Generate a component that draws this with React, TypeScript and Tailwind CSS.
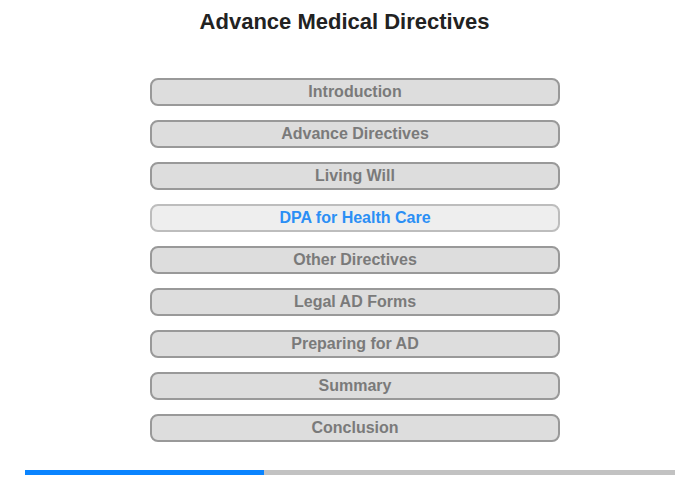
const chapters = [
  "Introduction",
  "Advance Directives",
  "Living Will",
  "DPA for Health Care",
  "Other Directives",
  "Legal AD Forms",
  "Preparing for AD",
  "Summary",
  "Conclusion",
];

const current = 3;

export default function App() {
  const percent = 36.8;

  return (
    <div
      className="w-[700px] h-[480px] bg-white overflow-hidden"
      style={{ fontFamily: '"Liberation Sans", Arial, sans-serif' }}
    >
      <h1 className="pt-[9px] pr-[11px] text-center text-[22px] leading-[26px] font-bold text-[#222]">
        Advance Medical Directives
      </h1>

      <div className="mt-[43px] pl-[10px] flex flex-col items-center gap-[14px]">
        {chapters.map((name, i) => (
          <div
            key={name}
            className={
              i === current
                ? "w-[410px] h-[28px] flex items-center justify-center rounded-[8px] border-2 border-[#bdbdbd] bg-[#eeeeee] text-[16px] font-bold text-[#2b8ff5]"
                : "w-[410px] h-[28px] flex items-center justify-center rounded-[8px] border-2 border-[#999999] bg-[#dddddd] text-[16px] font-bold text-[#7a7a7a]"
            }
          >
            {name}
          </div>
        ))}
      </div>

      <div className="mt-[28px] mx-[25px] h-[5px] bg-[#c2c2c2]">
        <div className="h-full bg-[#0a84ff]" style={{ width: `${percent}%` }} />
      </div>
    </div>
  );
}
